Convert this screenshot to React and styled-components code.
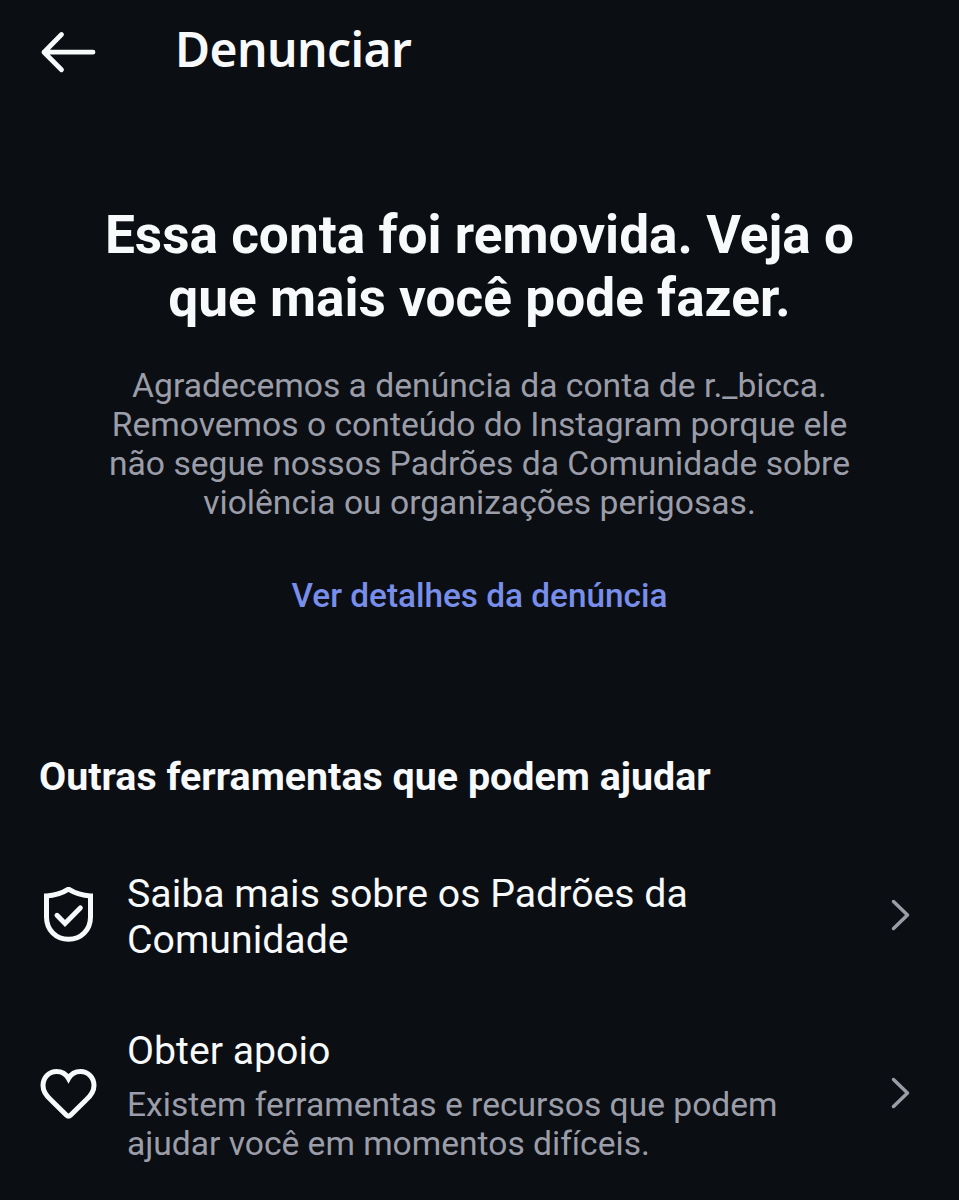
import React from 'react';
import styled, { createGlobalStyle } from 'styled-components';

const Global = createGlobalStyle`
  * { box-sizing: border-box; }
  body { margin: 0; background: #0b0e13; }
`;
const Screen = styled.main`
  width: 959px; height: 1200px; overflow: hidden;
  background: #0b0e13; color: #f7f9fb;
  font-family: Roboto, "Liberation Sans", sans-serif;
  display: flex; flex-direction: column;
`;
const Header = styled.header`
  display: flex; align-items: center; gap: 78px;
  height: 100px; padding-left: 40px;
`;
const BackIcon = styled.svg`
  width: 57px; height: 44px; flex: none; margin-top: 4px;
  fill: none; stroke: #f7f9fb; stroke-width: 4.8; stroke-linecap: round; stroke-linejoin: round;
`;
const Title = styled.h1`
  margin: 0 0 2px; font-family: "Noto Sans", sans-serif;
  font-size: 48px; line-height: 56px; font-weight: 650; white-space: nowrap;
  letter-spacing: -0.6px;
`;
const Intro = styled.section`
  display: flex; flex-direction: column; align-items: center; text-align: center;
  padding-top: 104px;
`;
const Headline = styled.h2`
  margin: 0; font-size: 53.2px; line-height: 63px; font-weight: 700; white-space: nowrap;
`;
const Line = styled.span`
  display: block; width: fit-content; white-space: nowrap;
  margin: ${p => (p.$center ? '0 auto' : '0')};
`;
const Body = styled.p`
  margin: 36px 0 0; font-size: 33.65px; line-height: 39px; color: #9b9da8;
`;
const DetailsLink = styled.a`
  margin-top: 54px; font-size: 33.35px; line-height: 40px; font-weight: 500; color: #788eea;
`;
const SectionTitle = styled.h3`
  margin: 138px 0 0 39px; font-size: 39.4px; line-height: 46px; font-weight: 700;
`;
const Row = styled.div`
  display: flex; align-items: center; padding: 0 48px 0 40px;
  margin-top: ${p => p.$top}px;
`;
const RowIcon = styled.svg`
  width: 57px; height: 58px; flex: none; margin-right: 30px;
  fill: none; stroke: #f7f9fb; stroke-width: 5; stroke-linecap: round; stroke-linejoin: ${p => p.$join || 'round'};
`;
const RowText = styled.div`flex: 1;`;
const RowTitle = styled.div`font-size: 39.25px; line-height: 46px; padding-top: 2px;`;
const RowNote = styled.div`
  margin-top: 11px; font-size: 33.6px; line-height: 39px; color: #9b9da8;
`;
const Chevron = styled.svg`
  width: 20px; height: 32px; flex: none; margin-bottom: 3px;
  fill: none; stroke: #9a9ca6; stroke-width: 3.5; stroke-linecap: round; stroke-linejoin: round;
`;
const Next = () => <Chevron viewBox="0 0 20 32"><path d="M2.500 2.500 16.500 16 2.500 29.500" /></Chevron>;

export default function App() {
  return (
    <Screen>
      <Global />
      <Header>
        <BackIcon viewBox="0 0 57 44"><path d="M53 22.200H4M21.500 4.500 4 22.200l17.500 17.500" /></BackIcon>
        <Title>Denunciar</Title>
      </Header>
      <Intro>
        <Headline>
          <Line $center>Essa conta foi removida. Veja o</Line>
          <Line $center>que mais você pode fazer.</Line>
        </Headline>
        <Body>
          <Line $center>Agradecemos a denúncia da conta de r._bicca.</Line>
          <Line $center>Removemos o conteúdo do Instagram porque ele</Line>
          <Line $center>não segue nossos Padrões da Comunidade sobre</Line>
          <Line $center>violência ou organizações perigosas.</Line>
        </Body>
        <DetailsLink>Ver detalhes da denúncia</DetailsLink>
      </Intro>
      <SectionTitle>Outras ferramentas que podem ajudar</SectionTitle>
      <Row $top={69}>
        <RowIcon viewBox="0 0 57 58" $join="miter">
          <path d="M28.500 2.200C22.500 6 14.500 8.700 6.500 8.900V30C6.500 43 16 52.300 28.500 52.300S50.500 43 50.500 30V8.900C42.500 8.700 34.500 6 28.500 2.200Z" />
          <path d="m17 28.300 8 8.200 15.300-15.600" />
        </RowIcon>
        <RowText><RowTitle><Line>Saiba mais sobre os Padrões da</Line><Line>Comunidade</Line></RowTitle></RowText>
        <Next />
      </Row>
      <Row $top={63}>
        <RowIcon viewBox="0 0 57 58">
          <path strokeLinejoin="miter" d="M28.500 12.500C26 8 21.500 5.500 16.500 5.500C9 5.500 3 11.500 3 19.500C3 26 6.500 30 11 34L26.500 49.200Q28.500 51.200 30.500 49.200L46 34C50.500 30 54 26 54 19.500C54 11.500 48 5.500 40.500 5.500C35.500 5.500 31 8 28.500 12.500Z" />
        </RowIcon>
        <RowText>
          <RowTitle>Obter apoio</RowTitle>
          <RowNote><Line>Existem ferramentas e recursos que podem</Line><Line>ajudar você em momentos difíceis.</Line></RowNote>
        </RowText>
        <Next />
      </Row>
    </Screen>
  );
}
